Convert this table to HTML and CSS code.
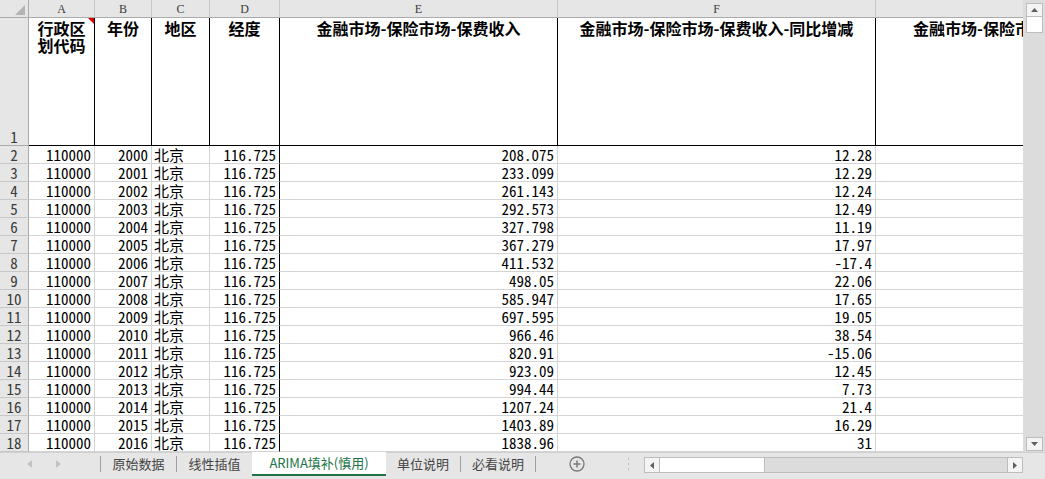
FILE: index.html
```html
<!DOCTYPE html>
<html lang="zh-CN">
<head>
<meta charset="utf-8">
<title>ARIMA填补(慎用)</title>
<link rel="stylesheet" href="styles.css">
</head>
<body>
<div class="app">
  <div class="main">
    <div class="viewport">
      <div class="sheet">
        <div class="corner"><svg width="10" height="10" viewBox="0 0 10 10"><polygon points="10,0 10,10 0,10" fill="#b4b4b4"/></svg></div>
        <div class="ch">A</div><div class="ch">B</div><div class="ch">C</div><div class="ch">D</div><div class="ch">E</div><div class="ch">F</div><div class="ch g">G</div>

        <div class="rh r1">1</div>
        <div class="h flag">行政区<br>划代码</div>
        <div class="h">年份</div>
        <div class="h">地区</div>
        <div class="h">经度</div>
        <div class="h">金融市场-保险市场-保费收入</div>
        <div class="h">金融市场-保险市场-保费收入-同比增减</div>
        <div class="h">金融市场-保险市场-赔付支出</div>

        <div class="rh">2</div><div class="c">110000</div><div class="c">2000</div><div class="c t">北京</div><div class="c d">116.725</div><div class="c">208.075</div><div class="c">12.28</div><div class="c"></div>
        <div class="rh">3</div><div class="c">110000</div><div class="c">2001</div><div class="c t">北京</div><div class="c d">116.725</div><div class="c">233.099</div><div class="c">12.29</div><div class="c"></div>
        <div class="rh">4</div><div class="c">110000</div><div class="c">2002</div><div class="c t">北京</div><div class="c d">116.725</div><div class="c">261.143</div><div class="c">12.24</div><div class="c"></div>
        <div class="rh">5</div><div class="c">110000</div><div class="c">2003</div><div class="c t">北京</div><div class="c d">116.725</div><div class="c">292.573</div><div class="c">12.49</div><div class="c"></div>
        <div class="rh">6</div><div class="c">110000</div><div class="c">2004</div><div class="c t">北京</div><div class="c d">116.725</div><div class="c">327.798</div><div class="c">11.19</div><div class="c"></div>
        <div class="rh">7</div><div class="c">110000</div><div class="c">2005</div><div class="c t">北京</div><div class="c d">116.725</div><div class="c">367.279</div><div class="c">17.97</div><div class="c"></div>
        <div class="rh">8</div><div class="c">110000</div><div class="c">2006</div><div class="c t">北京</div><div class="c d">116.725</div><div class="c">411.532</div><div class="c">-17.4</div><div class="c"></div>
        <div class="rh">9</div><div class="c">110000</div><div class="c">2007</div><div class="c t">北京</div><div class="c d">116.725</div><div class="c">498.05</div><div class="c">22.06</div><div class="c"></div>
        <div class="rh">10</div><div class="c">110000</div><div class="c">2008</div><div class="c t">北京</div><div class="c d">116.725</div><div class="c">585.947</div><div class="c">17.65</div><div class="c"></div>
        <div class="rh">11</div><div class="c">110000</div><div class="c">2009</div><div class="c t">北京</div><div class="c d">116.725</div><div class="c">697.595</div><div class="c">19.05</div><div class="c"></div>
        <div class="rh">12</div><div class="c">110000</div><div class="c">2010</div><div class="c t">北京</div><div class="c d">116.725</div><div class="c">966.46</div><div class="c">38.54</div><div class="c"></div>
        <div class="rh">13</div><div class="c">110000</div><div class="c">2011</div><div class="c t">北京</div><div class="c d">116.725</div><div class="c">820.91</div><div class="c">-15.06</div><div class="c"></div>
        <div class="rh">14</div><div class="c">110000</div><div class="c">2012</div><div class="c t">北京</div><div class="c d">116.725</div><div class="c">923.09</div><div class="c">12.45</div><div class="c"></div>
        <div class="rh">15</div><div class="c">110000</div><div class="c">2013</div><div class="c t">北京</div><div class="c d">116.725</div><div class="c">994.44</div><div class="c">7.73</div><div class="c"></div>
        <div class="rh">16</div><div class="c">110000</div><div class="c">2014</div><div class="c t">北京</div><div class="c d">116.725</div><div class="c">1207.24</div><div class="c">21.4</div><div class="c"></div>
        <div class="rh">17</div><div class="c">110000</div><div class="c">2015</div><div class="c t">北京</div><div class="c d">116.725</div><div class="c">1403.89</div><div class="c">16.29</div><div class="c"></div>
        <div class="rh">18</div><div class="c">110000</div><div class="c">2016</div><div class="c t">北京</div><div class="c d">116.725</div><div class="c">1838.96</div><div class="c">31</div><div class="c"></div>
      </div>
    </div>
    <div class="vscroll">
      <div class="sbtn"><svg width="7" height="4" viewBox="0 0 7 4"><polygon points="0,4 7,4 3.5,0" fill="#606060"/></svg></div>
      <div class="vthumb"></div>
      <div class="spacer"></div>
      <div class="sbtn"><svg width="7" height="4" viewBox="0 0 7 4"><polygon points="0,0 7,0 3.5,4" fill="#606060"/></svg></div>
    </div>
  </div>
  <div class="tabbar">
    <div class="nav">
      <svg width="5" height="8" viewBox="0 0 5 8"><polygon points="5,0 5,8 0,4" fill="#c4c4c4"/></svg>
      <svg width="5" height="8" viewBox="0 0 5 8"><polygon points="0,0 0,8 5,4" fill="#c4c4c4"/></svg>
    </div>
    <span class="sep"></span>
    <div class="tab w75">原始数据</div>
    <span class="sep"></span>
    <div class="tab w75">线性插值</div>
    <div class="tab active">ARIMA填补(慎用)</div>
    <div class="tab w74">单位说明</div>
    <span class="sep"></span>
    <div class="tab w74">必看说明</div>
    <span class="sep"></span>
    <div class="add"><svg width="16" height="16" viewBox="0 0 16 16"><circle cx="8" cy="8" r="7" fill="none" stroke="#7a7a7a" stroke-width="1.3"/><path d="M8 4.5v7M4.5 8h7" stroke="#7a7a7a" stroke-width="1.5"/></svg></div>
    <div class="dots"><svg width="3" height="14" viewBox="0 0 3 14"><rect x="1" y="1" width="1" height="2" fill="#bdbdbd"/><rect x="1" y="6" width="1" height="2" fill="#bdbdbd"/><rect x="1" y="11" width="1" height="2" fill="#bdbdbd"/></svg></div>
    <div class="hscroll">
      <div class="hbtn"><svg width="4" height="7" viewBox="0 0 4 7"><polygon points="4,0 4,7 0,3.5" fill="#606060"/></svg></div>
      <div class="hthumb"></div>
      <div class="spacer"></div>
      <div class="hbtn"><svg width="4" height="7" viewBox="0 0 4 7"><polygon points="0,0 0,7 4,3.5" fill="#606060"/></svg></div>
    </div>
  </div>
</div>
</body>
</html>
```
FILE: styles.css
```css
* { box-sizing: border-box; margin: 0; padding: 0; }
html, body { width: 1045px; height: 479px; overflow: hidden; }
body { background: #e6e6e6; font-family: "Noto Sans CJK SC", sans-serif; }

.app { display: flex; flex-direction: column; height: 479px; }
.main { display: flex; height: 452px; }
.viewport { width: 1023px; height: 452px; overflow: hidden; background: #fff; }

.sheet {
  display: grid;
  grid-template-columns: 29px 66px 57px 58px 70px 278px 318px 279px;
  grid-template-rows: 18px 128px repeat(17, 18px);
  width: 1155px;
}

.corner {
  background: #e6e6e6;
  border-right: 1px solid #ababab;
  border-bottom: 1px solid #ababab;
  display: flex; align-items: flex-end; justify-content: flex-end;
  padding: 0 3px 2px 0;
}
.ch {
  background: #e6e6e6;
  border-right: 1px solid #c8c8c8;
  border-bottom: 1px solid #ababab;
  display: flex; align-items: center; justify-content: center;
  font-family: "Liberation Serif", serif; font-size: 12px; color: #3c3c3c;
  padding-top: 1px;
}
.ch.g { justify-content: flex-start; padding-left: 205px; }

.rh {
  background: #e6e6e6;
  border-right: 1px solid #ababab;
  border-bottom: 1px solid #c8c8c8;
  display: flex; align-items: flex-end; justify-content: center;
  font-family: "Noto Sans Mono CJK SC", "Liberation Mono", monospace;
  font-size: 15px; line-height: 17px; color: #3c3c3c;
}
.rh.r1 { border-bottom-color: #ababab; padding-bottom: 0; }

.h {
  position: relative;
  border-right: 1px solid #000;
  border-bottom: 1px solid #000;
  display: flex; justify-content: center; align-items: flex-start;
  text-align: center; white-space: nowrap;
  font-family: "Noto Sans CJK SC", sans-serif; font-weight: 700;
  font-size: 16px; line-height: 17px; color: #000;
  padding-top: 2px; overflow: hidden;
}
.flag::after {
  content: ""; position: absolute; top: 0; right: 0;
  border-top: 6px solid #e00000; border-left: 6px solid transparent;
}

.c {
  border-right: 1px solid #d4d4d4;
  border-bottom: 1px solid #d4d4d4;
  display: flex; align-items: flex-end; justify-content: flex-end;
  padding-right: 3px; white-space: nowrap; overflow: hidden;
  font-family: "Noto Sans Mono CJK SC", "Liberation Mono", monospace;
  font-size: 15px; line-height: 17px; color: #000;
}
.c.t { justify-content: flex-start; padding: 0 0 0 2px; font-family: "Noto Sans CJK SC", sans-serif; }
.c.d { border-right-color: #000; }

.vscroll {
  width: 22px; height: 452px; background: #dcdcdc;
  display: flex; flex-direction: column; align-items: center;
  padding: 3px 0 1px 1px;
}
.sbtn {
  width: 17px; height: 14px; background: #f4f4f4; border: 1px solid #bdbdbd;
  display: flex; align-items: center; justify-content: center;
}
.vthumb { width: 17px; height: 16px; background: #fff; border: 1px solid #bdbdbd; border-top: none; }
.spacer { flex: 1; }

.tabbar {
  height: 27px; display: flex; align-items: flex-start;
  background: #e6e6e6; border-top: 1px solid #d0d0d0;
  font-family: "Noto Sans CJK SC", sans-serif; font-size: 13px; color: #444;
}
.nav { width: 100px; height: 22px; display: flex; align-items: center; gap: 24px; padding-left: 27px; }
.sep { width: 1px; height: 16px; margin-top: 3px; background: #a0a0a0; }
.tab { height: 22px; display: flex; align-items: center; justify-content: center; line-height: 22px; }
.w75 { width: 75px; }
.w74 { width: 74px; }
.tab.active {
  width: 134px; height: 24px; background: #fff; color: #217346;
  border-bottom: 2px solid #217346; margin-top: -1px; padding-bottom: 0;
}
.add { width: 16px; height: 16px; margin: 3px 0 0 33px; display: flex; }
.dots { margin: 4px 0 0 42px; display: flex; }
.hscroll {
  width: 379px; height: 16px; margin: 4px 0 0 14px;
  background: #dcdcdc; display: flex; border: 1px solid #bdbdbd;
}
.hbtn { width: 15px; height: 14px; background: #f4f4f4; display: flex; align-items: center; justify-content: center; }
.hbtn:first-child { border-right: 1px solid #bdbdbd; }
.hbtn:last-child { border-left: 1px solid #bdbdbd; }
.hthumb { width: 105px; height: 14px; background: #fff; border-right: 1px solid #bdbdbd; }
```
